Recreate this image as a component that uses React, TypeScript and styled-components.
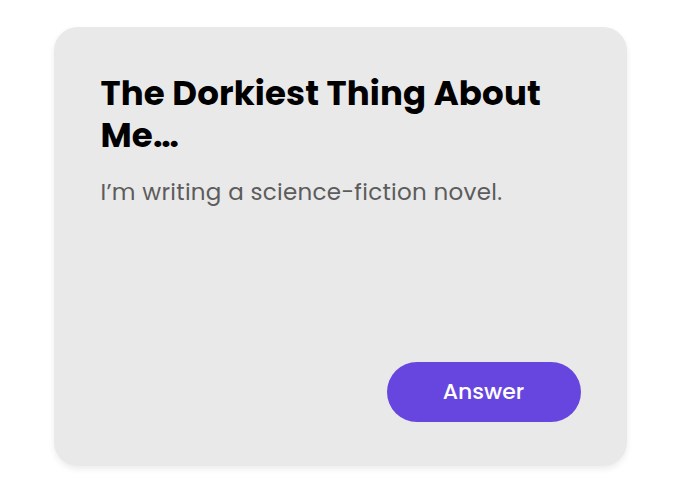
import * as React from 'react';
import styled, { createGlobalStyle } from 'styled-components';

const GlobalStyle = createGlobalStyle`
  html, body {
    margin: 0;
    padding: 0;
    background: #ffffff;
  }
  body {
    font-family: Poppins, Inter, "Noto Sans", sans-serif;
  }
`

const Page = styled.div`
  width: 680px;
  height: 492px;
  display: flex;
  align-items: center;
  justify-content: center;
`

const Card = styled.div`
  box-sizing: border-box;
  width: 573px;
  height: 439px;
  padding: 45px 46px 44px 47px;
  background: #e9e9e9;
  border-radius: 24px;
  box-shadow: 0 3px 6px rgba(0, 0, 0, 0.08);
  display: flex;
  flex-direction: column;
`

const Title = styled.h2`
  margin: 0;
  font-size: 34px;
  line-height: 42px;
  font-weight: 700;
  letter-spacing: 0.15px;
  color: #000000;
`

const Text = styled.p`
  margin: 20px 0 0;
  font-size: 23px;
  line-height: 32px;
  letter-spacing: 0.3px;
  color: #5c5c5c;
`

const Footer = styled.div`
  margin-top: auto;
  display: flex;
  justify-content: flex-end;
`

const Button = styled.button`
  width: 194px;
  height: 60px;
  border: none;
  border-radius: 30px;
  background: #6746e0;
  color: #ffffff;
  font-family: inherit;
  font-size: 22px;
  font-weight: 500;
  cursor: pointer;
`

export default function App() {
  return (
    <>
      <GlobalStyle />
      <Page>
        <Card>
          <Title>The Dorkiest Thing About Me…</Title>
          <Text>I’m writing a science-fiction novel.</Text>
          <Footer>
            <Button>Answer</Button>
          </Footer>
        </Card>
      </Page>
    </>
  );
}
